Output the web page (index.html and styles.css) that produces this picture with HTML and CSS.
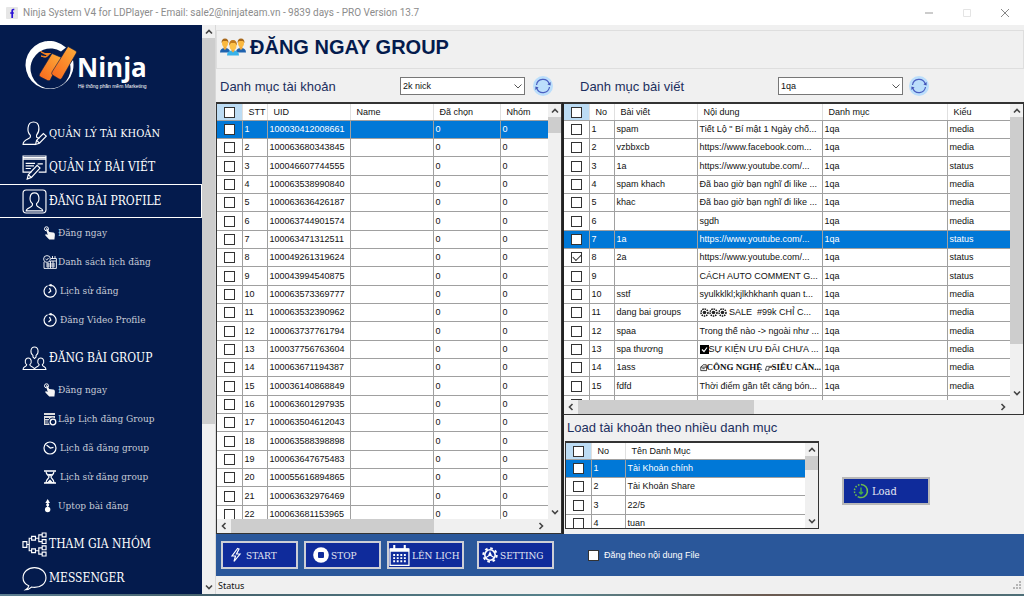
FILE: index.html
```html
<!DOCTYPE html>
<html lang="vi">
<head>
<meta charset="utf-8">
<title>Ninja System V4 for LDPlayer</title>
<link rel="stylesheet" href="styles.css">
</head>
<body>
<svg class="defs" aria-hidden="true">
  <symbol id="up" viewBox="0 0 8 8"><path d="M1 5.5 4 2.5 7 5.5" fill="none" stroke="#444" stroke-width="1.6"/></symbol>
  <symbol id="down" viewBox="0 0 8 8"><path d="M1 2.5 4 5.5 7 2.5" fill="none" stroke="#444" stroke-width="1.6"/></symbol>
  <symbol id="drop" viewBox="0 0 8 8"><path d="M.5 2.5 4 6 7.500 2.5" fill="none" stroke="#555" stroke-width="1"/></symbol>
  <symbol id="left" viewBox="0 0 8 8"><path d="M5.5 1 2.5 4 5.5 7" fill="none" stroke="#444" stroke-width="1.6"/></symbol>
  <symbol id="right" viewBox="0 0 8 8"><path d="M2.5 1 5.5 4 2.5 7" fill="none" stroke="#444" stroke-width="1.6"/></symbol>
  <symbol id="refresh" viewBox="0 0 20 20"><circle cx="10" cy="10" r="10" fill="#bbdefb"/><g fill="none" stroke="#4a5fc1" stroke-width="1.2"><path d="M3.500 9A6.600 6.600 0 0 1 16.200 7.700"/><path d="M16.500 11A6.600 6.600 0 0 1 3.800 12.300"/></g><path d="M17.600 6v3.600l-3.200-1.200zM2.400 14v-3.600l3.200 1.200z" fill="#3f51b5"/></symbol>
  <symbol id="user-edit" viewBox="0 0 24 24"><g fill="none" stroke="#fff" stroke-width="1.1"><path d="M8 13.5C5.5 11.500 5.500 9 5.800 6.500 6.200 3 8 1 11 1s5 2 5.200 5.500c.3 3-.4 5-2.200 7v2l2.600 1.200M8 13.500v2C7.500 17.500 1 17.500 1 22.500h11.500"/><path d="m13 22.500 1-4 6.500-6.500 2.800 2.500-6.600 6.800zM14 18.500l2.700 2.800"/></g></symbol>
  <symbol id="post-edit" viewBox="0 0 24 24"><g fill="none" stroke="#fff" stroke-width="1.100"><path d="M9 16.500H1V1h22v15.500h-7M1 4h22M1 2.500h22"/><path d="M3.500 8h9M3.500 10.500h8M3.500 13h5M15 8.500h5"/><path d="m5 23 1-4 8.500-9 2.800 2.600L9 21.500zM6 19l3 2.500"/></g></symbol>
  <symbol id="profile" viewBox="0 0 24 24"><g fill="none" stroke="#fff" stroke-width="1.100"><rect x="1" y="1" width="22" height="22" rx="3"/><path d="M4 21c0-3 5.500-3 6-5.500v-1.500C7.500 12 7.500 10 7.800 8c.3-3 2-4.300 4.200-4.300S15.900 5 16.200 8c.3 2 .3 4-2.200 6v1.500c.5 2.500 6 2.500 6 5.500z"/></g></symbol>
  <symbol id="group" viewBox="0 0 24 24"><g fill="none" stroke="#fff" stroke-width="1"><path d="M10.500 9C7.500 7 8 1 12 1s4.500 6 1.500 8v1.500L12 12l-1.500-1.500zM1 22.500c0-3 3.500-2.500 3.500-4.500C2 16 3 11.500 6 11.500s4 4.500 1.500 6.500c0 2 4.500 2 4.500 4.500zM12 22.500c0-2.500 4.500-2.500 4.500-4.500C14 16 15 11.500 18 11.500s4 4.500 1.500 6.500c0 2 3.500 1.500 3.500 4.500z"/></g></symbol>
  <symbol id="network" viewBox="0 0 26 26"><g fill="none" stroke="#fff" stroke-width="1.200"><path d="M1 10h4v6H1zM10 4.500h4v4h-4zM10 17.500h4v4h-4zM21 1h4v4h-4zM21 8h4v4h-4zM21 14.500h4v4h-4zM21 21h4v4h-4zM5 13h2.500M10 6.500H7.500v13H10M14 6.500h3.500M21 3h-3.500v7H21M14 19.500h3.500M21 16.500h-3.500V23H21"/></g></symbol>
  <symbol id="bubble" viewBox="0 0 24 24"><path d="M6.500 19C3 17.500 1 14.500 1 11.300 1 5.800 5.800 1.500 12 1.500s11 4.300 11 9.800-4.800 9.200-11 9.200c-1 0-2-.1-2.900-.3-1.600 1.600-3.400 2.500-5.600 2.600 1.600-1 2.700-2 3-3.800z" fill="none" stroke="#fff" stroke-width="1.100"/></symbol>
  <symbol id="tap" viewBox="0 0 14 14"><circle cx="3.500" cy="2.800" r="2" fill="none" stroke="#fff"/><path d="M3 2.500c.8-.6 1.300 0 1.600.6l1.600 3 4 .5c1.300.2 1.700 1.200 1.700 2.400l-.5 4.500H6.200L2.400 9.500c-.5-1 .5-1.500 1.300-1l1 .5z" fill="#f4f4f4"/></symbol>
  <symbol id="calendar-clock" viewBox="0 0 14 14"><g fill="none" stroke="#fff" stroke-width=".9"><path d="M1 7v6.400h12.400V3.500H8"/><circle cx="4" cy="4" r="3.400"/><path d="m2.600 4 1.200 1 1.700-2M3 9h9M3 11h9M5 8v5M7.500 6v7M10 6v7M8 6h5M9.500 1v3M12 1v3"/></g></symbol>
  <symbol id="history" viewBox="0 0 14 14"><g fill="none" stroke="#fff" stroke-width="1.200"><path d="M4.500 1.700A6 6 0 1 0 8 1.200M6.500 4l1.300 3-2.300 2"/></g><path d="m5 1.200 3.500-1.500v3z" fill="#fff"/></symbol>
  <symbol id="schedule" viewBox="0 0 14 14"><path d="M1 1h11v2H1zM1 4h11v2.500a4 4 0 0 0-5 6.500H1z" fill="#ddd"/><path d="M2 6.500h4M2 9h4M2 11h3" stroke="#041b4d"/><circle cx="10" cy="10" r="2.800" fill="none" stroke="#fff" stroke-width="1.300"/></symbol>
  <symbol id="clock" viewBox="0 0 14 14"><g fill="none" stroke="#fff" stroke-width="1.200"><circle cx="7" cy="7" r="6"/><path d="M3.500 4 7.300 7l3.200-.7"/></g></symbol>
  <symbol id="hourglass" viewBox="0 0 14 14"><path d="M1 1h12M1 13h12" stroke="#fff" stroke-width="1.600"/><path d="M3 1.500c0 3 3 4 3 5.500s-3 2.500-3 5.500h8c0-3-3-4-3-5.500s3-2.500 3-5.500" fill="none" stroke="#fff" stroke-width="1.200"/><path d="M4.500 4h5L7 6.500zM4 12.500l3-3 3 3z" fill="#fff"/></symbol>
  <symbol id="uptop" viewBox="0 0 10 12"><path d="M3 1v8" stroke="#fff"/><path d="M3 0 5 3.500H1z" fill="#fff"/><circle cx="3" cy="5" r="1.300" fill="#fff"/><circle cx="3" cy="9" r="2.300" fill="#fff"/></symbol>
</svg>

<header class="titlebar">
  <svg class="app-icon" viewBox="0 0 12 12"><rect width="12" height="12" rx="1" fill="#e6e6e6"/><path d="M8.300 2.500H7.200c-.7 0-1 .4-1 1V11M4.200 6h3.600" fill="none" stroke="#2a12d8" stroke-width="1.700"/></svg>
  <span class="app-title">Ninja System V4 for LDPlayer - Email: sale2@ninjateam.vn - 9839 days - PRO Version 13.7</span>
  <button class="win-btn" aria-label="Minimize"><svg viewBox="0 0 10 10"><path d="M1 5h8" stroke="#999"/></svg></button>
  <button class="win-btn" aria-label="Maximize"><svg viewBox="0 0 10 10"><path d="M1.500 1.500h7v7h-7z" fill="none" stroke="#e4e4e4"/></svg></button>
  <button class="win-btn" aria-label="Close"><svg viewBox="0 0 10 10"><path d="m1 1 8 8M9 1 1 9" stroke="#888"/></svg></button>
</header>

<div class="app">
  <nav class="sidebar">
    <div class="logo">
      <svg class="logo-mark" viewBox="0 0 52 50">
        <defs><linearGradient id="orange" x1="0" y1="1" x2="1" y2="0"><stop offset="0" stop-color="#f8651c"/><stop offset="1" stop-color="#fdae3a"/></linearGradient></defs>
        <path d="M41 6.500A24 24 0 1 0 48 19l-3 4A20 20 0 1 1 36 10.500z" fill="#fff"/>
        <path d="m27 12.500 9.500 4-11 22q-1 2-3 1l-7-3.500q-2-1-1-3z" fill="url(#orange)" stroke="#041b4d" stroke-width=".6"/>
        <path d="m43 5.500 8 4.500q1 1 .3 2L37 37q-1 2-3 1l-6.500-4q-1.500-1-.5-3z" fill="url(#orange)" stroke="#041b4d" stroke-width=".6"/>
        <path d="M15.500 10.500q4 3 10 2-4 3-10-2M16 15q5 2 8-2-2 5-8 2" fill="#f8831f" stroke="#f8831f"/>
      </svg>
      <div class="logo-text"><strong>Ninja</strong><small>Hệ thống phần mềm Marketing</small></div>
    </div>
    <a class="item compact" href="#"><svg><use href="#user-edit"/></svg>QUẢN LÝ TÀI KHOẢN</a>
    <a class="item" href="#"><svg><use href="#post-edit"/></svg>QUẢN LÝ BÀI VIẾT</a>
    <a class="item active" href="#"><svg><use href="#profile"/></svg>ĐĂNG BÀI PROFILE</a>
    <a class="sub" href="#"><svg><use href="#tap"/></svg>Đăng ngay</a>
    <a class="sub" href="#"><svg><use href="#calendar-clock"/></svg>Danh sách lịch đăng</a>
    <a class="sub roomy" href="#"><svg><use href="#history"/></svg>Lịch sử đăng</a>
    <a class="sub roomy" href="#"><svg><use href="#history"/></svg>Đăng Video Profile</a>
    <a class="item spaced" href="#"><svg><use href="#group"/></svg>ĐĂNG BÀI GROUP</a>
    <a class="sub" href="#"><svg><use href="#tap"/></svg>Đăng ngay</a>
    <a class="sub" href="#"><svg><use href="#schedule"/></svg>Lập Lịch đăng Group</a>
    <a class="sub roomy" href="#"><svg><use href="#clock"/></svg>Lịch đã đăng group</a>
    <a class="sub roomy" href="#"><svg><use href="#hourglass"/></svg>Lịch sử đăng group</a>
    <a class="sub" href="#"><svg><use href="#uptop"/></svg>Uptop bài đăng</a>
    <a class="item spaced" href="#"><svg><use href="#network"/></svg>THAM GIA NHÓM</a>
    <a class="item" href="#"><svg><use href="#bubble"/></svg>MESSENGER</a>
  </nav>
  <div class="vscroll side-scroll"><svg><use href="#up"/></svg><div class="track"><i class="thumb thumb-side"></i></div><svg><use href="#down"/></svg></div>

  <main class="main">
    <h1 class="heading">
      <svg viewBox="0 0 26 18"><path d="M0 14.500q0-4.500 5-4.500t5 4.500zM16 14.500q0-4.500 5-4.500t5 4.500z" fill="#1f62ae"/><path d="M3.500 7h3v3.500L5 12l-1.500-1.500zM19.500 7h3v3.500L21 12l-1.500-1.500z" fill="#f2a93b"/><ellipse cx="5" cy="5" rx="3" ry="4" fill="#fbb93f"/><ellipse cx="21" cy="5" rx="3" ry="4" fill="#fbb93f"/><path d="M1.500 5q0-4.500 3.500-4.500T8.500 5L7 3H3zM17.500 5q0-4.500 3.500-4.500T24.500 5L23 3h-4z" fill="#a8681a"/><path d="M7 17.500q0-5 6-5t6 5z" fill="#38b2ea"/><path d="M11.500 10h3v3L13 14.500 11.500 13z" fill="#f2a93b"/><ellipse cx="13" cy="7.500" rx="3.500" ry="4.500" fill="#fdc24a"/><path d="M9 7.500q0-5.500 4-5.500t4 5.500L15 5h-4z" fill="#c07a1e"/></svg>
      ĐĂNG NGAY GROUP
    </h1>
    <div class="panels">
      <section class="panel accounts">
        <div class="filter">
          <label for="acc">Danh mục tài khoản</label>
          <span class="combo"><select id="acc"><option>2k nick</option></select><svg><use href="#drop"/></svg></span>
          <button class="refresh" aria-label="Refresh accounts"><svg><use href="#refresh"/></svg></button>
        </div>
        <div class="grid">
          <div class="viewport">
            <table>
              <colgroup><col class="c-check"><col class="c-num"><col class="c-uid"><col class="c-uid"><col class="c-picked"><col></colgroup>
              <thead><tr><th class="check"><input type="checkbox" aria-label="All accounts"></th><th>STT</th><th>UID</th><th>Name</th><th>Đã chọn</th><th>Nhóm</th></tr></thead>
              <tbody id="accounts"></tbody>
            </table>
          </div>
          <div class="vscroll"><svg><use href="#up"/></svg><div class="track"><i class="thumb thumb-acc"></i></div><svg><use href="#down"/></svg></div>
          <div class="hscroll"><svg><use href="#left"/></svg><div class="track"><i class="thumb thumb-acc-h"></i></div><svg><use href="#right"/></svg></div>
        </div>
      </section>
      <section class="panel posts">
        <div class="filter">
          <label for="post">Danh mục bài viết</label>
          <span class="combo"><select id="post"><option>1qa</option></select><svg><use href="#drop"/></svg></span>
          <button class="refresh" aria-label="Refresh posts"><svg><use href="#refresh"/></svg></button>
        </div>
        <div class="grid">
          <div class="viewport">
            <table>
              <colgroup><col class="c-check"><col class="c-num"><col class="c-uid"><col class="c-text"><col class="c-text"><col></colgroup>
              <thead><tr><th class="check"><input type="checkbox" aria-label="All posts"></th><th>No</th><th>Bài viết</th><th>Nội dung</th><th>Danh mục</th><th>Kiểu</th></tr></thead>
              <tbody id="posts"></tbody>
            </table>
          </div>
          <div class="vscroll"><svg><use href="#up"/></svg><div class="track"><i class="thumb thumb-post"></i></div><svg><use href="#down"/></svg></div>
          <div class="hscroll"><svg><use href="#left"/></svg><div class="track"><i class="thumb thumb-post-h"></i></div><svg><use href="#right"/></svg></div>
        </div>
        <h2 class="subtitle">Load tài khoản theo nhiều danh mục</h2>
        <div class="loader">
          <div class="grid small">
            <div class="viewport">
              <table>
                <colgroup><col class="c-check"><col class="c-no"><col></colgroup>
                <thead><tr><th class="check"><input type="checkbox" aria-label="All categories"></th><th>No</th><th>Tên Danh Mục</th></tr></thead>
                <tbody id="categories"></tbody>
              </table>
            </div>
            <div class="vscroll"><svg><use href="#up"/></svg><div class="track"><i class="thumb thumb-cat"></i></div><svg><use href="#down"/></svg></div>
          </div>
          <button class="action load"><svg viewBox="0 0 16 16"><path d="M8 1.500a6.500 6.500 0 1 1-2 12.700" fill="none" stroke="#6fbf4b" stroke-width="1.500"/><path d="M6 14.200A6.500 6.500 0 0 1 8 1.500" fill="none" stroke="#6fbf4b" stroke-width="1.500" stroke-dasharray="1.500 1.500"/><path d="M8 4.500v6M6 9l2 2 2-2" fill="none" stroke="#3faa4c" stroke-width="1.500"/></svg>Load</button>
        </div>
      </section>
    </div>
    <div class="toolbar">
      <button class="action start"><svg viewBox="0 0 16 16"><path d="M9.500 1.500 4 9h3.500l-1.500 5.500L12 7H8.500L11 2z" fill="none" stroke="#fff" stroke-width="1.200"/></svg>START</button>
      <button class="action stop"><svg viewBox="0 0 16 16"><circle cx="8" cy="8" r="7.800" fill="#fff"/><rect x="5" y="5" width="6" height="6" rx="1" fill="#0f2b9b"/></svg>STOP</button>
      <button class="action plan"><svg viewBox="0 0 20 20"><path d="M1 4h18v15.500H1z" fill="none" stroke="#fff" stroke-width="1.200"/><path d="M1 3h18v3.500H1zM4 0h2v4H4zM14 0h2v4h-2z" fill="#fff"/><path d="M4 9.500h12M4 12.500h12M4 15.500h12" stroke="#fff" stroke-width="1.800" stroke-dasharray="1.800 1.600"/></svg>LÊN LỊCH</button>
      <button class="action setting"><svg viewBox="0 0 16 16"><circle cx="8" cy="8" r="6.700" fill="none" stroke="#fff" stroke-width="2" stroke-dasharray="2.600 2.660"/><circle cx="8" cy="8" r="5.200" fill="none" stroke="#fff" stroke-width="1.600"/><path d="m8 4 2 4.500H6z" fill="#fff"/><path d="M8 8 4 10.500M8 8l4 2.500" stroke="#fff" stroke-width="1.200"/></svg>SETTING</button>
      <label class="file"><input type="checkbox">Đăng theo nội dung File</label>
    </div>
    <footer class="status"><span>Status</span><svg viewBox="0 0 10 10"><path d="M7 1h2v2H7zM4 4h2v2H4zM7 4h2v2H7zM1 7h2v2H1zM4 7h2v2H4zM7 7h2v2H7z" fill="#b5b5b5"/></svg></footer>
  </main>
</div>
<div class="desktop"></div>
<script src="app.js"></script>
</body>
</html>
```
FILE: styles.css
```css
* { box-sizing: border-box; }
body {
  margin: 0;
  height: 100vh;
  display: flex;
  flex-direction: column;
  overflow: hidden;
  background: #f0f0f0;
  font-family: "Liberation Sans", Arial, sans-serif;
  font-size: 9px;
  color: #111;
}
svg { display: block; flex: none; }
button { font: inherit; padding: 0; border: 0; background: none; }
.defs { position: absolute; width: 0; height: 0; }

.titlebar {
  flex: none;
  height: 25px;
  display: flex;
  align-items: center;
  padding-left: 6px;
  background: #fff;
  color: #8c8c8c;
  font-family: Roboto, "Open Sans", sans-serif;
  font-size: 10px;
}
.app-icon { width: 12px; height: 12px; margin-right: 5px; }
.app-title { flex: 1; white-space: nowrap; }
.win-btn { width: 38px; height: 24px; display: flex; align-items: center; justify-content: center; }
.win-btn svg { width: 10px; height: 10px; }

.app { flex: 1; min-height: 0; display: flex; }
.desktop { flex: none; height: 2px; background: linear-gradient(90deg, #5d7f92, #43606b 20%, #56828c 55%, #6b5a50 75%, #4d6f78); }

.sidebar {
  flex: none;
  width: 202px;
  overflow: hidden;
  background: #041b4d;
  color: #fff;
  font-family: "DejaVu Serif Condensed", "DejaVu Serif", serif;
}
.logo { display: flex; height: 91px; padding: 16px 0 0 25px; }
.logo-mark { width: 52px; height: 50px; }
.logo-text { display: flex; flex-direction: column; padding-top: 11px; }
.logo-text strong { font: bold 26px/31px "Open Sans", sans-serif; }
.logo-text small { padding-left: 1px; font: 5px/6px "Liberation Sans", sans-serif; white-space: nowrap; }
.item, .sub { display: flex; align-items: center; color: inherit; text-decoration: none; white-space: nowrap; }
.item { height: 34px; padding-left: 22px; gap: 2px; font-size: 12px; border: 1px solid transparent; border-left: 0; }
.item.compact { font-size: 11px; }
.item svg { width: 25px; height: 25px; }
.item.active { border-color: #fff; }
.item.spaced { margin-top: 7px; }
.sub { height: 29px; padding-left: 43px; gap: 1px; font-size: 10px; color: #c6cbd6; }
.sub.roomy { gap: 3px; }
.sub svg { width: 14px; height: 14px; }

.vscroll, .hscroll { display: flex; align-items: center; background: #f0f0f0; }
.vscroll { flex-direction: column; padding: 3px 0; gap: 2px; }
.hscroll { padding: 0 3px; gap: 3px; }
.vscroll > svg, .hscroll > svg { width: 8px; height: 8px; }
.track { flex: 1; align-self: stretch; display: flex; }
.vscroll .track { flex-direction: column; }
.thumb { background: #cdcdcd; }
.side-scroll { flex: none; width: 13px; }
.thumb-side { height: 71%; }
.thumb-acc { height: 4%; }
.thumb-post { height: 84%; }
.thumb-cat { height: 24%; }
.thumb-acc-h { width: 67%; }
.thumb-post-h { width: 42%; }

.main { flex: 1; min-width: 0; display: flex; flex-direction: column; border-left: 1px solid #d8d8d8; }
.heading {
  flex: none;
  display: flex;
  align-items: center;
  gap: 4px;
  height: 39px;
  margin: 5px 0 0;
  padding: 0 0 5px 3px;
  border: 1px solid #dedede;
  font: bold 20px "Liberation Sans", Arial, sans-serif;
  color: #041b4d;
}
.heading svg { width: 26px; height: 18px; }
.panels { flex: 1; min-height: 0; display: flex; }
.panel { min-width: 0; display: flex; flex-direction: column; }
.accounts { flex: 346 1 0; }
.posts { flex: 462 1 0; }
.filter {
  flex: none;
  height: 33px;
  display: flex;
  align-items: center;
  padding: 1px 9px 0 4px;
  font-size: 13px;
  color: #1c2f5e;
}
.filter label { flex: 1; }
.posts .filter { padding: 1px 95px 0 18px; }
.combo { position: relative; width: 125px; height: 18px; }
.combo select {
  appearance: none;
  width: 100%;
  height: 100%;
  padding: 0 2px;
  border: 1px solid #777;
  border-radius: 0;
  background: #fff;
  color: #111;
  font: 9px "Liberation Sans", Arial, sans-serif;
}
.combo svg { position: absolute; right: 3px; top: 5px; width: 8px; height: 8px; }
.refresh { margin-left: 8px; }
.posts .refresh { margin-left: 6px; }
.refresh svg { width: 20px; height: 20px; }

.grid {
  flex: 1;
  min-height: 0;
  display: grid;
  grid-template-columns: minmax(0, 1fr) 13px;
  grid-template-rows: minmax(0, 1fr) 14px;
  border: 1px solid #333;
  border-top: 2px solid #333;
}
.posts > .grid { border-left: 2px solid #222; }
.viewport { overflow: hidden; background: #fff; }
.hscroll { grid-column: 1; }
table { width: 100%; table-layout: fixed; border-collapse: collapse; }
th, td {
  height: 18px;
  padding: 0 0 0 2px;
  border: solid #a0a0a0;
  border-width: 0 1px 1px 0;
  overflow: hidden;
  white-space: nowrap;
  text-align: left;
  font-weight: normal;
  line-height: 14px;
}
th { height: 16px; padding-left: 6px; border-right-color: #e0e0e0; }
tr:nth-child(3n) td { height: 19px; }
th:last-child, td:last-child { border-right: 0; }
th.check, td.check { padding: 0; text-align: center; line-height: 12px; }
th.check { background: #bcdcf4; }
tr.selected td { background: #0078d7; color: #fff; }
.c-check { width: 25px; }
.c-num { width: 25px; }
.c-no { width: 34px; }
.c-uid { width: 83px; }
.c-picked { width: 67px; }
.c-text { width: 125px; }

input[type="checkbox"] {
  appearance: none;
  display: inline-block;
  vertical-align: middle;
  width: 11px;
  height: 11px;
  margin: 0;
  border: 1px solid #333;
  background: #fff;
}
.tick { position: relative; display: inline-block; height: 11px; vertical-align: middle; line-height: 11px; }
.tick::after {
  content: "";
  position: absolute;
  left: 2px;
  top: 2px;
  width: 7px;
  height: 4px;
  border: solid #333;
  border-width: 0 0 1px 1px;
  transform: rotate(-45deg);
}
.glyph { display: inline-block; width: 9px; height: 9px; vertical-align: middle; }
.fancy { font: bold 9px "Liberation Serif", serif; }
.fancy .glyph { width: 7px; }

.subtitle {
  flex: none;
  margin: 0;
  padding-left: 3px;
  border-left: 2px solid #222;
  font: 13px/26px "Liberation Sans", Arial, sans-serif;
  color: #1c2f5e;
}
.loader { flex: none; display: flex; align-items: center; padding: 0 0 5px 1px; border-left: 2px solid #222; }
.grid.small { flex: 0 0 254px; height: 88px; grid-template-rows: minmax(0, 1fr); }

.action {
  display: flex;
  align-items: center;
  width: 77px;
  height: 28px;
  border: 2px solid #cdcfd6;
  background: #0f2b9b;
  color: #e4e7f2;
  font-family: "DejaVu Serif Condensed", "DejaVu Serif", serif;
  font-size: 10px;
  white-space: nowrap;
}
.action svg { width: 16px; height: 16px; }
.load { width: 88px; margin: 12px 0 0 23px; padding-left: 9px; gap: 3px; border-color: #b8b8b8; font-size: 11px; }
.toolbar { flex: none; display: flex; align-items: center; gap: 6px; height: 42px; padding-left: 5px; background: #2a579a; }
.start { padding-left: 5px; gap: 2px; }
.stop { padding-left: 7px; gap: 2px; }
.plan { gap: 2px; }
.plan svg { width: 21px; height: 21px; }
.setting { margin-left: 7px; padding-left: 3px; gap: 2px; }
.file { display: flex; align-items: center; gap: 5px; margin-left: 28px; color: #fff; }
.status {
  flex: none;
  display: flex;
  align-items: center;
  justify-content: space-between;
  height: 18px;
  padding: 0 2px;
  font: 9px "Noto Sans", "Open Sans", sans-serif;
}
.status svg { width: 10px; height: 10px; }
```
FILE: app.js
```js
const uids = ["100030412008661", "100063680343845", "100046607744555", "100063538990840", "100063636426187", "100063744901574", "100063471312511", "100049261319624", "100043994540875", "100063573369777", "100063532390962", "100063737761794", "100037756763604", "100063671194387", "100036140868849", "100063601297935", "100063504612043", "100063588398898", "100063647675483", "100055616894865", "100063632976469", "100063681153965"];

const flower = '<svg class="glyph" viewBox="0 0 9 9"><circle cx="4.500" cy="4.500" r="3.500" fill="none" stroke="#111" stroke-width="1.500" stroke-dasharray="1.500 .8"/><circle cx="4.500" cy="4.500" r="1.800" fill="#222"/></svg>';
const tickBox = '<svg class="glyph" viewBox="0 0 9 9"><rect width="9" height="9" fill="#000"/><path d="m2 4.500 2 2 3-4" fill="none" stroke="#fff" stroke-width="1.200"/></svg>';
const house = '<svg class="glyph" viewBox="0 0 9 9"><path d="M1 4 4 1h4v3M1 8.500h7.500V4H1zM3 6h3" fill="none" stroke="#111"/></svg>';
const hand = '<svg class="glyph" viewBox="0 0 9 9"><path d="M.5 8 2 3h6.500v1.500H5v3.500z" fill="none" stroke="#111" stroke-width=".9"/></svg>';

const posts = [
  ["spam", "Tiết Lộ \" Bí mật 1 Ngày chố...", "media"],
  ["vzbbxcb", "https://www.facebook.com...", "media"],
  ["1a", "https://www.youtube.com/...", "status"],
  ["spam khach", "Đã bao giờ bạn nghĩ đi like ...", "media"],
  ["khac", "Đã bao giờ bạn nghĩ đi like ...", "media"],
  ["", "sgdh", "media"],
  ["1a", "https://www.youtube.com/...", "status"],
  ["2a", "https://www.youtube.com/...", "status"],
  ["", "CÁCH AUTO COMMENT G...", "status"],
  ["sstf", "syulkklkl;kjlkhkhanh quan t...", "media"],
  ["dang bai groups", flower + flower + flower + " SALE &nbsp;#99k CHỈ C...", "media"],
  ["spaa", "Trong thế nào -&gt; ngoài như ...", "media"],
  ["spa thương", tickBox + "SỰ KIỆN ƯU ĐÃI CHƯA ...", "media"],
  ["1ass", '<span class="fancy">' + house + "CÔNG NGHỆ " + hand + "SIÊU CĂN...</span>", "media"],
  ["fdfd", "Thời điểm gần tết căng bón...", "media"],
  ["", "", ""]
];
const categories = ["Tài Khoản chính", "Tài Khoản Share", "22/5", "tuan"];

function fill(id, rows, selected, checked) {
  document.getElementById(id).innerHTML = rows.map((cells, i) => {
    const on = i === checked;
    const input = `<input type="checkbox" aria-label="Row ${i + 1}"${on ? " checked" : ""}>`;
    const box = on ? `<span class="tick">${input}</span>` : input;
    return `<tr class="${i === selected ? "selected" : ""}"><td class="check">${box}</td>` + cells.map(c => `<td>${c}</td>`).join("") + "</tr>";
  }).join("");
}
fill("accounts", uids.map((u, i) => [i + 1, u, "", 0, 0]), 0, -1);
fill("posts", posts.map((p, i) => [i < 15 ? i + 1 : "", p[0], p[1], p[2] ? "1qa" : "", p[2]]), 6, 7);
fill("categories", categories.map((c, i) => [i + 1, c]), 0, -1);
```
